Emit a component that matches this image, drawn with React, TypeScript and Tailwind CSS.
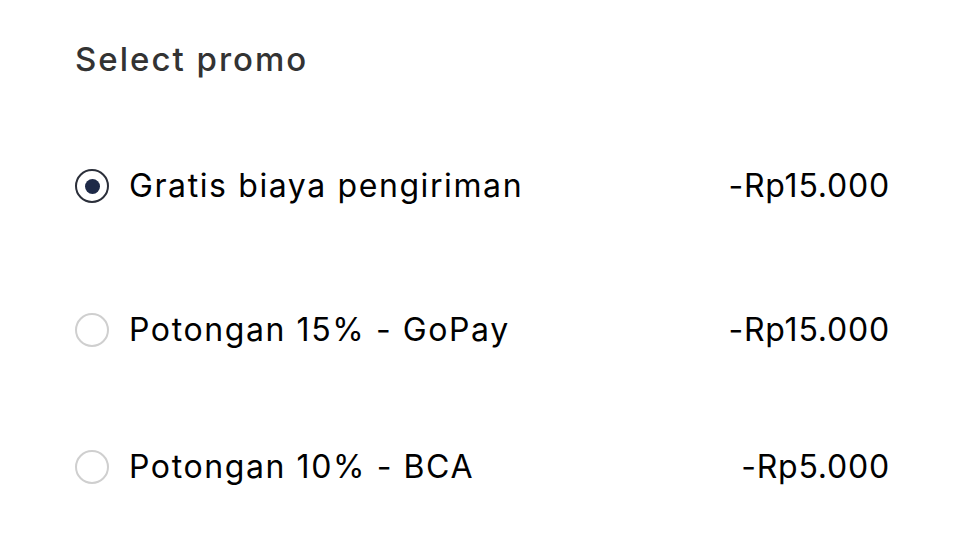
import React, { useState } from 'react';

type Promo = {
  id: string;
  label: string;
  amount: string;
};

const promos: Promo[] = [
  { id: 'ongkir', label: 'Gratis biaya pengiriman', amount: '-Rp15.000' },
  { id: 'gopay', label: 'Potongan 15% - GoPay', amount: '-Rp15.000' },
  { id: 'bca', label: 'Potongan 10% - BCA', amount: '-Rp5.000' },
];

function Radio({ checked }: { checked: boolean }) {
  return (
    <span
      className={
        checked
          ? 'flex h-[34px] w-[34px] shrink-0 items-center justify-center rounded-full border-[2.5px] border-[#2b2f3a]'
          : 'flex h-[34px] w-[34px] shrink-0 items-center justify-center rounded-full border-[2.5px] border-[#cfcfcf]'
      }
    >
      {checked && <span className="h-[15px] w-[15px] rounded-full bg-[#1e2a48]" />}
    </span>
  );
}

export default function App() {
  const [selected, setSelected] = useState('ongkir');

  return (
    <div className="h-[554px] w-[976px] bg-white font-['Inter',sans-serif] text-black">
      <div className="pl-[75px] pr-[86px] pt-[37px]">
        <h2 className="text-[33px] font-medium leading-[44px] tracking-[2px] text-[#333333]">
          Select promo
        </h2>

        <ul className="mt-[83px]">
          {promos.map((p, i) => (
            <li
              key={p.id}
              onClick={() => setSelected(p.id)}
              className={
                i === 0
                  ? 'flex h-[44px] cursor-pointer items-center'
                  : i === 1
                    ? 'mt-[100px] flex h-[44px] cursor-pointer items-center'
                    : 'mt-[93px] flex h-[44px] cursor-pointer items-center'
              }
            >
              <Radio checked={selected === p.id} />
              <span className="ml-[20px] text-[32px] leading-none tracking-[1.6px]">{p.label}</span>
              <span className="ml-auto text-[32px] leading-none tracking-[0.8px]">{p.amount}</span>
            </li>
          ))}
        </ul>
      </div>
    </div>
  );
}
